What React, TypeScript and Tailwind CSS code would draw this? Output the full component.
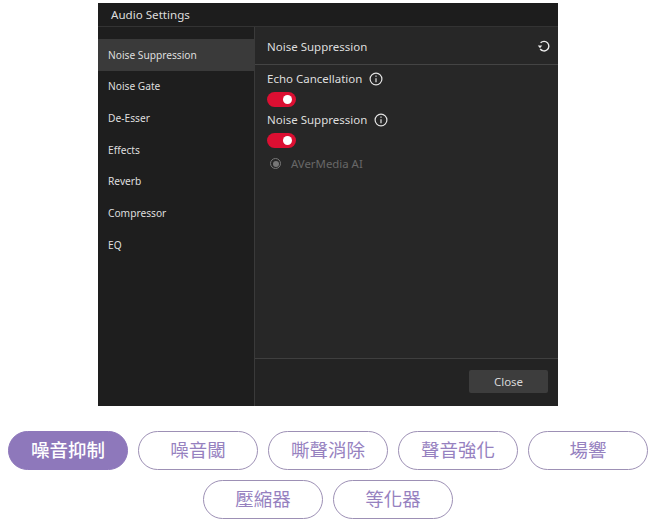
const menuItems = ['Noise Suppression', 'Noise Gate', 'De-Esser', 'Effects', 'Reverb', 'Compressor', 'EQ'];
const pills = ['噪音抑制', '噪音閾', '嘶聲消除', '聲音強化', '場響', '壓縮器', '等化器'];

function InfoIcon() {
  return (
    <svg width="14" height="14" viewBox="0 0 14 14" fill="none" stroke="#e4e4e4" strokeWidth="1.2" className="ml-[7px]">
      <circle cx="7" cy="7" r="5.9" />
      <path d="M7 6.2v4" />
      <path d="M7 3.6v1.2" />
    </svg>
  );
}

function Toggle() {
  return (
    <div className="flex h-[15px] w-[29px] items-center justify-end rounded-full bg-[#dc0f32] pr-[4px]">
      <div className="h-[9px] w-[9px] rounded-full bg-white" />
    </div>
  );
}

export default function App() {
  return (
    <div className="h-[524px] w-[655px] overflow-hidden bg-white pt-[3px] font-['Noto_Sans','Open_Sans',sans-serif]">
      {/* Dialog */}
      <div className="ml-[98px] flex h-[403px] w-[460px] flex-col bg-[#1f1f1f] text-[#dedede]">
        <div className="flex h-[24px] items-center border-b border-[#333333] bg-[#1d1d1d] pl-[13px] text-[11.6px]">
          Audio Settings
        </div>
        <div className="flex min-h-0 flex-1">
          {/* Sidebar */}
          <div className="w-[157px] border-r border-[#3a3a3a] bg-[#1e1e1e] pt-[12px]">
            {menuItems.map((item, i) => (
              <div
                key={item}
                className={`flex h-[31.67px] items-center pl-[10px] pt-[1px] text-[10.2px] ${i === 0 ? 'bg-[#3a3a3a]' : ''}`}
              >
                {item}
              </div>
            ))}
          </div>

          {/* Content */}
          <div className="flex flex-1 flex-col bg-[#272727]">
            <div className="flex h-[38px] items-center justify-between border-b border-[#444444] pl-[12px] pr-[7px] pt-[2px] text-[11.5px]">
              <span>Noise Suppression</span>
              <svg width="14" height="14" viewBox="0 0 14 14" fill="none" stroke="#ececec" strokeWidth="1.4" className="-mt-[2px]">
                <path d="M3.6 3.8A4.8 4.8 0 1 1 3.2 10" />
                <path d="M0.8 6.6h4.4L3 9.2z" fill="#ececec" stroke="none" />
              </svg>
            </div>
            <div className="flex-1 pl-[12px] pt-[4px]">
              <div className="flex h-[19px] items-center text-[11.5px]">
                Echo Cancellation
                <InfoIcon />
              </div>
              <div className="mt-[4px]">
                <Toggle />
              </div>
              <div className="mt-[3px] flex h-[19px] items-center text-[11.5px]">
                Noise Suppression
                <InfoIcon />
              </div>
              <div className="mt-[4px]">
                <Toggle />
              </div>
              <div className="mt-[7px] flex items-center pl-[3px] text-[11.4px] text-[#686868]">
                <div className="flex h-[11px] w-[11px] items-center justify-center rounded-full border border-[#777777]">
                  <div className="h-[6px] w-[6px] rounded-full bg-[#777777]" />
                </div>
                <span className="ml-[10px]">AVerMedia AI</span>
              </div>
            </div>
            <div className="flex h-[48px] items-start justify-end border-t border-[#3f3f3f] bg-[#232323] pr-[10px] pt-[11px]">
              <div className="flex h-[23px] w-[79px] items-center justify-center rounded-[2px] bg-[#3d3d3d] text-[11.5px] text-[#d8d8d8]">
                Close
              </div>
            </div>
          </div>
        </div>
      </div>

      {/* Tabs */}
      <div className="mt-[25px] flex flex-wrap justify-center gap-[10px] pl-[8px] pr-[7px] font-['Noto_Sans_CJK_TC',sans-serif]">
        {pills.map((pill, i) => (
          <div
            key={pill}
            className={`flex h-[39px] w-[120px] items-center justify-center rounded-full border pb-[1px] text-[18.5px] ${
              i === 0
                ? 'border-[#8e78bb] bg-[#8e78bb] font-medium text-white'
                : 'border-[#9d90b5] bg-white text-[#9681bf]'
            }`}
          >
            {pill}
          </div>
        ))}
      </div>
    </div>
  );
}
